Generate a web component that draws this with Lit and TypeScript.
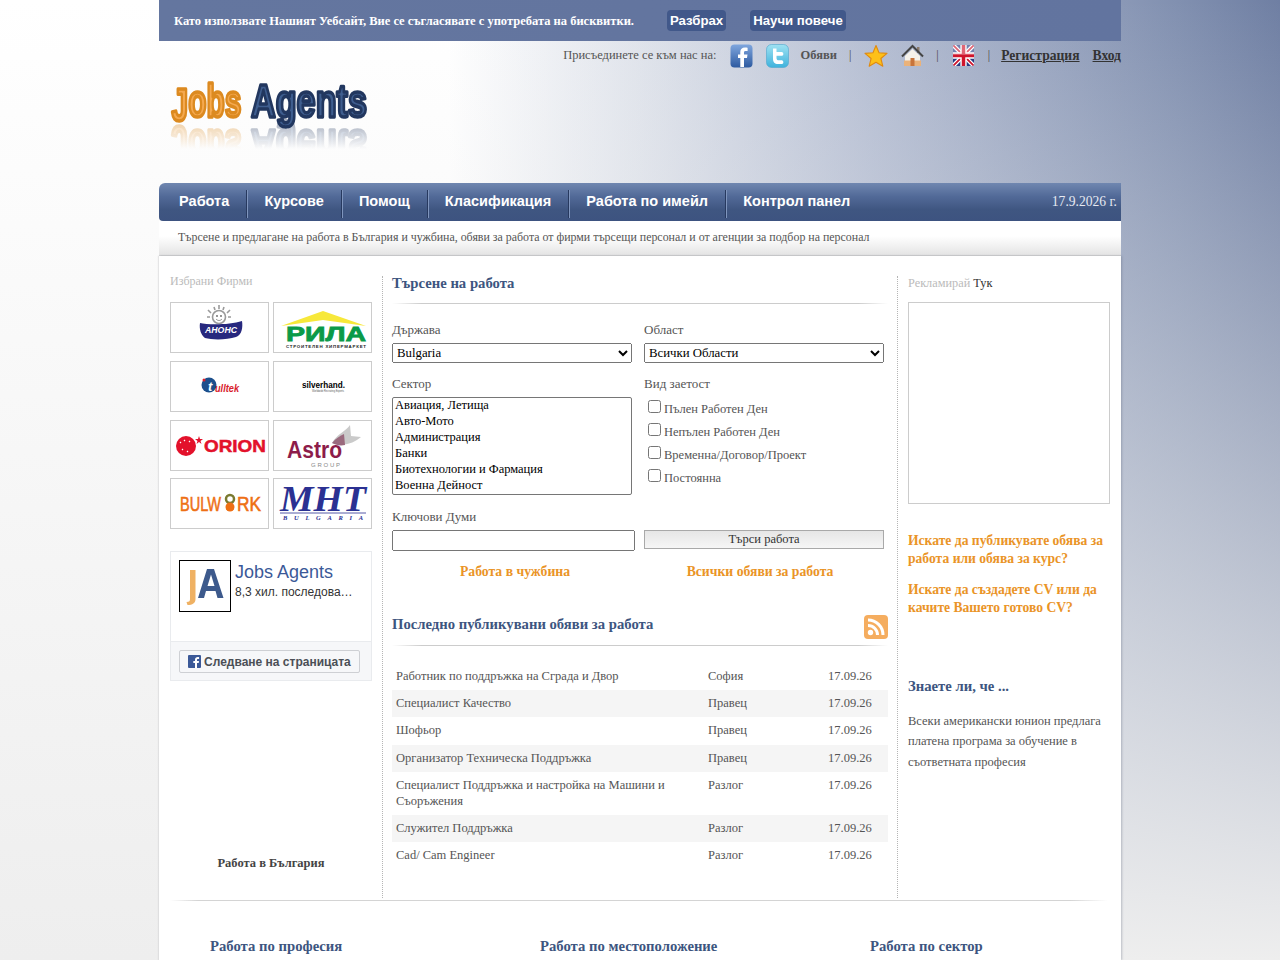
import { LitElement, html, css, svg } from "lit";
import { customElement } from "lit/decorators.js";

const NAV = ["Работа", "Курсове", "Помощ", "Класификация", "Работа по имейл", "Контрол панел"];
const SECTORS = ["Авиация, Летища", "Авто-Мото", "Администрация", "Банки", "Биотехнологии и Фармация", "Военна Дейност", "Горско Стопанство"];
const TYPES = ["Пълен Работен Ден", "Непълен Работен Ден", "Временна/Договор/Проект", "Постоянна"];
const JOBS = [
  ["Работник по поддръжка на Сграда и Двор", "София"],
  ["Специалист Качество", "Правец"],
  ["Шофьор", "Правец"],
  ["Организатор Техническа Поддръжка", "Правец"],
  ["Специалист Поддръжка и настройка на Машини и Съоръжения", "Разлог"],
  ["Служител Поддръжка", "Разлог"],
  ["Cad/ Cam Engineer", "Разлог"],
];

const LOGOS = [
  svg`<g fill="none" stroke="#9a9a9a" stroke-width="1.600"><circle cx="48" cy="14" r="6.500" fill="#fff"/><path d="M40 10l-3-3M44 7l-1-3M48 6V2M52 7l1-3M56 10l3-3M39 14h-3M57 14h3"/></g>
    <circle cx="46" cy="13" r=".9" fill="#666"/><circle cx="50" cy="13" r=".9" fill="#666"/><path d="M45 16c2 2 4 2 6 0" fill="none" stroke="#666" stroke-width=".7"/>
    <path d="M29 20c8 2 30 2 42-2 1 6 0 14-6 16-9 3-24 3-31 1-4-3-6-9-5-15z" fill="#27287e"/>
    <text x="50" y="30" text-anchor="middle" font-family="Liberation Sans" font-weight="700" font-style="italic" font-size="9.500" fill="#fff" textLength="32" lengthAdjust="spacingAndGlyphs">АНОНС</text>`,
  svg`<path d="M7 23L49 8l43 15-43-6z" fill="#f7e83a"/>
    <text x="52" y="38" text-anchor="middle" font-family="Liberation Sans" font-weight="700" font-size="20" fill="#0a9a48" stroke="#0a9a48" stroke-width=".8" textLength="80" lengthAdjust="spacingAndGlyphs">РИЛА</text>
    <text x="52" y="44.500" text-anchor="middle" font-family="Liberation Sans" font-weight="700" font-size="4.400" fill="#222" textLength="80" lengthAdjust="spacing">СТРОИТЕЛЕН ХИПЕРМАРКЕТ</text>`,
  svg`<circle cx="38" cy="23" r="7.500" fill="#1c4f8c"/><circle cx="33" cy="18" r="1.500" fill="#d8202c"/>
    <text x="37" y="29" font-family="Liberation Sans" font-weight="700" font-style="italic" font-size="13" fill="#fff">t</text>
    <text x="44" y="30" font-family="Liberation Sans" font-weight="700" font-style="italic" font-size="11.500" fill="#d8202c" textLength="24" lengthAdjust="spacingAndGlyphs">ulltek</text>`,
  svg`<text x="28" y="26" font-family="Liberation Sans" font-weight="700" font-size="9" fill="#000" textLength="43" lengthAdjust="spacingAndGlyphs">silverhand.</text>
    <text x="38" y="30" font-family="Liberation Sans" font-size="2.800" fill="#555" textLength="32" lengthAdjust="spacingAndGlyphs">Worldwide Recruiting Experts</text>`,
  svg`<circle cx="15" cy="25" r="10" fill="#e3112b"/><path d="M9 21l1 1M13 19l1 1M18 20l1 1M11 28l1 1M16 30l1 1" stroke="#fff" stroke-width="1.200"/>
    <path d="M28 15l1 3h3l-2.500 2 1 3-2.500-2-2.500 2 1-3L24 18h3z" fill="#e3112b"/>
    <text x="33" y="31" font-family="Liberation Sans" font-weight="700" font-size="17" fill="#e3112b" stroke="#e3112b" stroke-width=".5" textLength="62" lengthAdjust="spacingAndGlyphs">ORION</text>`,
  svg`<path d="M58 22C62 14 72 10 76 4L77 15 87 16C80 22 70 26 58 22z" fill="#cacaca"/><path d="M58 22C62 17 66 15 70 13L71 24C66 25 62 24 58 22z" fill="#9a6a7e"/>
    <text x="13" y="37" font-family="Liberation Sans" font-weight="700" font-size="23" fill="#8d1c4a" textLength="55" lengthAdjust="spacingAndGlyphs">Astro</text>
    <text x="37" y="46" font-family="Liberation Sans" font-size="6" fill="#888" textLength="29" lengthAdjust="spacing">GROUP</text>`,
  svg`<text x="9" y="32" font-family="Liberation Sans" font-size="21" fill="#ee6f14" stroke="#ee6f14" stroke-width=".6" textLength="41" lengthAdjust="spacingAndGlyphs">BULW</text>
    <circle cx="59" cy="20" r="4" fill="none" stroke="#7a7a30" stroke-width="2.500"/><circle cx="59" cy="28" r="4.500" fill="#ee6f14"/>
    <text x="66" y="32" font-family="Liberation Sans" font-size="21" fill="#ee6f14" stroke="#ee6f14" stroke-width=".6" textLength="24" lengthAdjust="spacingAndGlyphs">RK</text>`,
  svg`<text x="49" y="32" text-anchor="middle" font-family="Liberation Serif" font-weight="700" font-style="italic" font-size="35" fill="#2b3192" textLength="86" lengthAdjust="spacingAndGlyphs">MHT</text>
    <path d="M6 34h86" stroke="#2b3192" stroke-width=".8"/>
    <text x="49" y="41" text-anchor="middle" font-family="Liberation Serif" font-weight="700" font-style="italic" font-size="6.500" fill="#2b3192" textLength="80" lengthAdjust="spacing">BULGARIA</text>`,
];

@customElement("app-root")
export class AppRoot extends LitElement {
  static styles = css`
    :host {
      display: block;
      height: 960px;
      overflow: hidden;
      font-family: "Liberation Serif", serif;
      font-size: 13px;
      color: #555;
      background:
        linear-gradient(to bottom, rgba(238, 238, 238, 0) 0%, rgba(238, 238, 238, 1) 100%),
        linear-gradient(to right, #fff 0%, #fff 35%, #dfe3eb 50%, #b4bdd2 68%, #8190b0 92%, #6f7fa3 100%);
    }
    .page { width: 962px; margin: 0 auto; }
    .cookie {
      height: 41px; box-sizing: border-box; padding-left: 15px;
      background: linear-gradient(to right, #64769f, #62749f);
      display: flex; align-items: center;
      color: #fff; font-weight: 700; font-size: 12.500px;
    }
    .cookie .msg { padding-top: 1px; }
    .cookie .btn {
      font-family: "Liberation Sans", sans-serif; font-size: 13.200px;
      background: #41588a; border-radius: 4px; padding: 0 3px; height: 21px; line-height: 21px;
    }
    .cookie .first { margin-left: 33px; }
    .cookie .second { margin-left: 24px; }
    .head { height: 142px; }
    .top { height: 28px; display: flex; justify-content: flex-end; align-items: center; padding-top: 1px; box-sizing: border-box; font-size: 12.500px; }
    .top svg { display: block; }
    .top b { font-size: 12.500px; }
    .top .sep { font-size: 12px; color: #444; }
    .top a { color: #333; font-weight: 700; font-size: 13.600px; text-decoration: underline; }
    .m11 { margin-left: 11px; }
    .m13 { margin-left: 13px; }
    .m12 { margin-left: 12px; }
    .m14 { margin-left: 14px; }
    .logo { display: block; margin: 9px 0 0 9px; overflow: visible; -webkit-box-reflect: below -9px linear-gradient(to bottom, transparent 40%, rgba(255, 255, 255, .42) 100%); }
    .logo text { font-family: "Liberation Sans", sans-serif; font-weight: 700; font-size: 47px; stroke-width: 3.600px; stroke-linejoin: round; }
    .logo .j { fill: #f5a94f; stroke: #dc8a20; }
    .logo .a { fill: #3f5e8f; stroke: #22375f; }
    .nav {
      height: 38px; display: flex; align-items: center;
      border-radius: 6px 0 0 4px; padding-left: 3px;
      background: linear-gradient(to bottom, #7087b0 0%, #526a98 35%, #3f5681 70%, #3d5380 100%);
    }
    .nav .item {
      font-family: "Liberation Sans", sans-serif; font-weight: 700; font-size: 14.500px; color: #fff;
      height: 28px; line-height: 22px; padding: 0 17.100px; box-sizing: border-box;
      border-right: 1px solid #27395f; box-shadow: 1px 0 0 #7f95bd;
      margin-top: 3px;
    }
    .nav .item:nth-last-child(2) { border-right: 0; box-shadow: none; }
    .nav .date { margin-left: auto; margin-right: 4px; font-size: 13.600px; color: #e6eaf2; }
    .tag {
      height: 35px; box-sizing: border-box; border-bottom: 1px solid #d4d4d4; padding-left: 19px;
      font-size: 11.920px; line-height: 32px; color: #555;
      background: linear-gradient(to bottom, #fff 0%, #fff 45%, #e4e4e4 100%);
    }
    .main {
      background: #fff; box-shadow: 1px 0 2px rgba(90, 100, 120, .35), -1px 0 1px rgba(215, 215, 215, .5);
    }
    .cols { display: flex; padding-left: 11px; }
    .left { width: 212px; box-sizing: border-box; padding-top: 17px; flex: none; }
    .dim { color: #bbb; line-height: 16px; font-size: 12px; }
    .logos { display: grid; grid-template-columns: 99px 99px; column-gap: 4px; row-gap: 7.800px; margin-top: 13px; width: 202px; }
    .lg { height: 51px; box-sizing: border-box; border: 1px solid #ccc; background: #fff; }
    .lg svg { display: block; }
    .fb { width: 202px; height: 130px; box-sizing: border-box; border: 1px solid #e9ebee; margin-top: 22px; font-family: "Liberation Sans", sans-serif; display: flex; flex-direction: column; }
    .fb .body { flex: 1; display: flex; padding: 8px 8px 0; gap: 4px; }
    .fb .pic { width: 52px; height: 52px; box-sizing: border-box; border: 1px solid #000; display: block; }
    .fb .name { font-size: 18px; color: #3b5998; line-height: 22px; margin-top: 1px; }
    .fb .cnt { font-size: 12px; color: #333; line-height: 16px; margin-top: 1px; white-space: nowrap; }
    .fb .foot { height: 39px; box-sizing: border-box; background: #f6f7f9; border-top: 1px solid #e9ebee; padding: 8px 11px 0 8px; }
    .fb .fbtn { height: 23px; box-sizing: border-box; border: 1px solid #ced0d4; border-radius: 2px; background: #f6f7f9; display: flex; align-items: center; gap: 3px; padding-left: 8px; font-size: 12px; font-weight: 700; color: #4b4f56; }
    .bg { text-align: center; font-weight: 700; font-size: 12.500px; color: #444; line-height: 16px; margin-top: 174px; width: 202px; }
    .center {
      width: 516px; box-sizing: border-box; flex: none;
      border-left: 1px dotted #b5b5b5; border-right: 1px dotted #b5b5b5;
      padding: 0 9px 29px 9px; margin-top: 20px;
    }
    h2 { margin: 0; font-size: 14.700px; line-height: 18px; color: #3d5580; font-weight: 700; }
    .center > h2 { margin-top: -2px; }
    .rule { height: 1px; background: linear-gradient(to right, transparent, #ccc 6%, #ccc 94%, transparent); }
    .center > .rule.a { margin-top: 11px; }
    .form { display: grid; grid-template-columns: 252px 240px; }
    .lb { line-height: 16px; color: #555; }
    select { display: block; width: 240px; font-family: "Liberation Serif", serif; color: #000; box-sizing: border-box; margin: 0; }
    .one { height: 20px; margin-top: 5px; font-size: 12.800px; }
    .many { height: 98px; margin-top: 5px; overflow: hidden; scrollbar-width: none; font-size: 12.500px; }
    .r1 { margin-top: 18px; }
    .r2 { margin-top: 13px; }
    .r3 { margin-top: 14px; }
    .checks { margin-top: 8px; padding-left: 4px; }
    .chk { display: flex; height: 23px; font-size: 12.500px; }
    .chk input { margin: 0 3px 0 0; width: 13px; height: 13px; }
    .chk span { line-height: 16px; padding-top: 1px; }
    .kw { display: block; width: 243px; height: 21px; box-sizing: border-box; margin: 5px 0 0; padding: 0 2px; }
    .go { display: block; width: 240px; height: 19px; box-sizing: border-box; margin: 21px 0 0; padding: 0; border: 1px solid #a9a9a9; background: linear-gradient(to bottom, #e6e6e6, #f6f6f6); font-family: "Liberation Serif", serif; font-size: 12.500px; color: #333; line-height: 15px; text-align: center; }
    .orange { color: #ea9427; font-weight: 700; font-size: 13.700px; line-height: 18px; text-decoration: none; display: block; }
    .links { display: grid; grid-template-columns: 246px 246px; margin-top: 12px; text-align: center; }
    .links a + a { padding-right: 2px; }
    .lastHead { display: flex; justify-content: space-between; margin-top: 34px; height: 30px; }
    .rss { display: block; }
    table { border-collapse: collapse; width: 496px; margin-top: 17px; table-layout: fixed; font-size: 12.500px; }
    td { vertical-align: top; padding: 5px 4px 6px; line-height: 16px; color: #555; }
    tr.alt td { background: #f5f5f5; }
    tr:nth-child(4) td { padding-bottom: 7px; }
    .c1 { width: 312px; }
    .c2 { width: 120px; }
    .right { padding: 19px 0 0 10px; width: 223px; box-sizing: border-box; flex: none; }
    .right .dim2 { line-height: 16px; color: #333; font-size: 12.300px; }
    .right .dim2 span { color: #bbb; }
    .ad { width: 202px; height: 202px; box-sizing: border-box; border: 1px solid #ccc; margin-top: 11px; }
    .right .orange { width: 202px; font-size: 13.600px; }
    .o1 { margin-top: 28px; }
    .o2 { margin-top: 13px; }
    .know { margin-top: 60px; }
    .fact { margin: 15.700px 0 0; line-height: 20.500px; width: 202px; font-size: 12.500px; }
    .rule.bottom { margin: 2px 13px 0 11px; background: linear-gradient(to right, transparent, #d4d4d4 3%, #d4d4d4 96%, transparent); }
    .foot3 { display: grid; grid-template-columns: 330px 330px 250px; padding: 36px 0 5px 51px; }
  `;

  private icons() {
    return html`
      <svg class="m13" width="24" height="24" viewBox="0 0 24 24"><defs><linearGradient id="f" x1="0" y1="0" x2="0" y2="1"><stop offset="0" stop-color="#7fa6de"/><stop offset="1" stop-color="#2d5aa0"/></linearGradient></defs><rect x=".5" y=".5" width="22" height="23" rx="4" fill="url(#f)"/><path d="M14 23v-9h3l.500-3.500H14V8.500c0-1 .300-1.600 1.700-1.600h1.900V3.700c-.400 0-1.500-.200-2.700-.200-2.800 0-4.600 1.600-4.600 4.600v2.400H8V14h2.300v9z" fill="#fff"/></svg>
      <svg class="m12" width="24" height="24" viewBox="0 0 24 24"><defs><linearGradient id="t" x1="0" y1="0" x2="0" y2="1"><stop offset="0" stop-color="#9fe2f2"/><stop offset="1" stop-color="#3fb2dc"/></linearGradient></defs><rect x=".5" y=".5" width="22" height="23" rx="5" fill="url(#t)" stroke="#4fa6cc" stroke-width=".6"/><path d="M7 4.500h3.500V8H16a2 2 0 0 1 0 3.800h-5.500V14c0 1.500.800 2.300 2.300 2.300H16a2 2 0 0 1 0 3.800h-4C8.800 20.100 7 18 7 15z" fill="#fff"/></svg>
      <b class="m11">Обяви</b>
      <span class="sep m12">|</span>
      <svg class="m13" width="24" height="24" viewBox="0 0 24 24"><path d="M12 1.500l3 7.300 8 .600-6.100 5.100 1.900 7.700L12 18.200l-6.800 4 1.900-7.700L1 9.400l8-.600z" fill="#fdc018" stroke="#e08a10" stroke-width="1.100" stroke-linejoin="round"/></svg>
      <svg class="m13" width="23" height="24" viewBox="0 0 23 24"><path d="M4 12L11.500 5 19 12v9.500H4z" fill="#f6f2ea"/><rect x="16" y="3" width="2.500" height="6" fill="#8a7a6a"/><path d="M1 12.500L11.500 2 22 12.500" fill="none" stroke="#444" stroke-width="2"/><path d="M3 16.500h17v5.500H3z" fill="#eab27a"/><rect x="9.500" y="14" width="4" height="8" fill="#c8743a"/></svg>
      <span class="sep m12">|</span>
      <svg class="m14" width="21" height="21" viewBox="0 0 60 60"><defs><clipPath id="uk"><rect width="60" height="60" rx="5"/></clipPath></defs><g clip-path="url(#uk)"><rect width="60" height="60" fill="#2a3d84"/><path d="M0 0L60 60M60 0L0 60" stroke="#fff" stroke-width="12"/><path d="M0 0L60 60M60 0L0 60" stroke="#cf142b" stroke-width="5"/><path d="M30 0v60M0 30h60" stroke="#fff" stroke-width="18"/><path d="M30 0v60M0 30h60" stroke="#cf142b" stroke-width="10"/><rect width="60" height="28" fill="#fff" opacity=".35"/></g></svg>
      <span class="sep m14">|</span>
    `;
  }

  private logo() {
    return html`<svg class="logo" width="202" height="50" viewBox="0 0 202 50">
      <text class="j" x="3.500" y="39" textLength="70" lengthAdjust="spacingAndGlyphs"><tspan dy="4">J</tspan><tspan dy="-4">obs</tspan></text>
      <text class="a" x="83" y="39" textLength="116" lengthAdjust="spacingAndGlyphs">Agents</text>
    </svg>`;
  }

  render() {
    return html`<div class="page">
      <div class="cookie">
        <span class="msg">Като използвате Нашият Уебсайт, Вие се съгласявате с употребата на бисквитки.</span>
        <span class="btn first">Разбрах</span><span class="btn second">Научи повече</span>
      </div>
      <div class="head">
        <div class="top">
          <span>Присъединете се към нас на:</span>
          ${this.icons()}
          <a class="m11">Регистрация</a><a class="m13">Вход</a>
        </div>
        ${this.logo()}
      </div>
      <div class="nav">
        ${NAV.map((n) => html`<span class="item">${n}</span>`)}
        <span class="date">17.9.2026 г.</span>
      </div>
      <div class="tag">Търсене и предлагане на работа в България и чужбина, обяви за работа от фирми търсещи персонал и от агенции за подбор на персонал</div>
      <div class="main">
        <div class="cols">
          <div class="left">
            <div class="dim">Избрани Фирми</div>
            <div class="logos">${LOGOS.map((l) => html`<div class="lg"><svg width="97" height="49" viewBox="0 0 97 49">${l}</svg></div>`)}</div>
            <div class="fb">
              <div class="body">
                <svg class="pic" viewBox="0 0 50 50"><path d="M10 9h5.500v29c0 4-3 6-8 6l-1-3c3 0 3.500-1 3.500-3z" fill="#efb163"/><path fill-rule="evenodd" d="M18 37L27 8h7l9.500 29h-6l-2-7H26l-2 7zM27.500 25h7L31 13.500z" fill="#3d5a8c"/></svg>
                <div><div class="name">Jobs Agents</div><div class="cnt">8,3 хил. последова…</div></div>
              </div>
              <div class="foot"><div class="fbtn"><svg width="13" height="13" viewBox="0 0 13 13"><rect width="13" height="13" rx="1" fill="#3b5998"/><path d="M9 13V8h1.700l.300-2H9V5c0-.600.200-1 1-1h1.100V2.200C10.800 2.100 10.300 2 9.700 2 8.200 2 7 3 7 4.800V6H5.300v2H7v5z" fill="#fff"/></svg>Следване на страницата</div></div>
            </div>
            <div class="bg">Работа в България</div>
          </div>
          <div class="center">
            <h2>Търсене на работа</h2>
            <div class="rule a"></div>
            <div class="form r1">
              <div><div class="lb">Държава</div><select class="one"><option>Bulgaria</option></select></div>
              <div><div class="lb">Област</div><select class="one"><option>Всички Области</option></select></div>
            </div>
            <div class="form r2">
              <div><div class="lb">Сектор</div><select class="many" multiple size="6">${SECTORS.map((s) => html`<option>${s}</option>`)}</select></div>
              <div><div class="lb">Вид заетост</div><div class="checks">${TYPES.map((t) => html`<label class="chk"><input type="checkbox" /><span>${t}</span></label>`)}</div></div>
            </div>
            <div class="form r3">
              <div><div class="lb">Ключови Думи</div><input class="kw" type="text" /></div>
              <div><button class="go">Търси работа</button></div>
            </div>
            <div class="links"><a class="orange">Работа в чужбина</a><a class="orange">Всички обяви за работа</a></div>
            <div class="lastHead"><h2>Последно публикувани обяви за работа</h2>
              <svg class="rss" width="24" height="24" viewBox="0 0 24 24"><rect width="24" height="24" rx="4" fill="#f5ad5f"/><circle cx="6.500" cy="17.500" r="2.700" fill="#fff"/><path d="M4 10.500a9.500 9.500 0 0 1 9.500 9.500M4 5a15 15 0 0 1 15 15" fill="none" stroke="#fff" stroke-width="3"/></svg>
            </div>
            <div class="rule"></div>
            <table>
              <colgroup><col class="c1" /><col class="c2" /><col /></colgroup>
              ${JOBS.map((j, i) => html`<tr class=${i % 2 ? "alt" : ""}><td>${j[0]}</td><td>${j[1]}</td><td>17.09.26</td></tr>`)}
            </table>
          </div>
          <div class="right">
            <div class="dim2"><span>Рекламирай</span> Тук</div>
            <div class="ad"></div>
            <a class="orange o1">Искате да публикувате обява за работа или обява за курс?</a>
            <a class="orange o2">Искате да създадете CV или да качите Вашето готово CV?</a>
            <h2 class="know">Знаете ли, че ...</h2>
            <p class="fact">Всеки американски юнион предлага платена програма за обучение в съответната професия</p>
          </div>
        </div>
        <div class="rule bottom"></div>
        <div class="foot3"><h2>Работа по професия</h2><h2>Работа по местоположение</h2><h2>Работа по сектор</h2></div>
      </div>
    </div>`;
  }
}
